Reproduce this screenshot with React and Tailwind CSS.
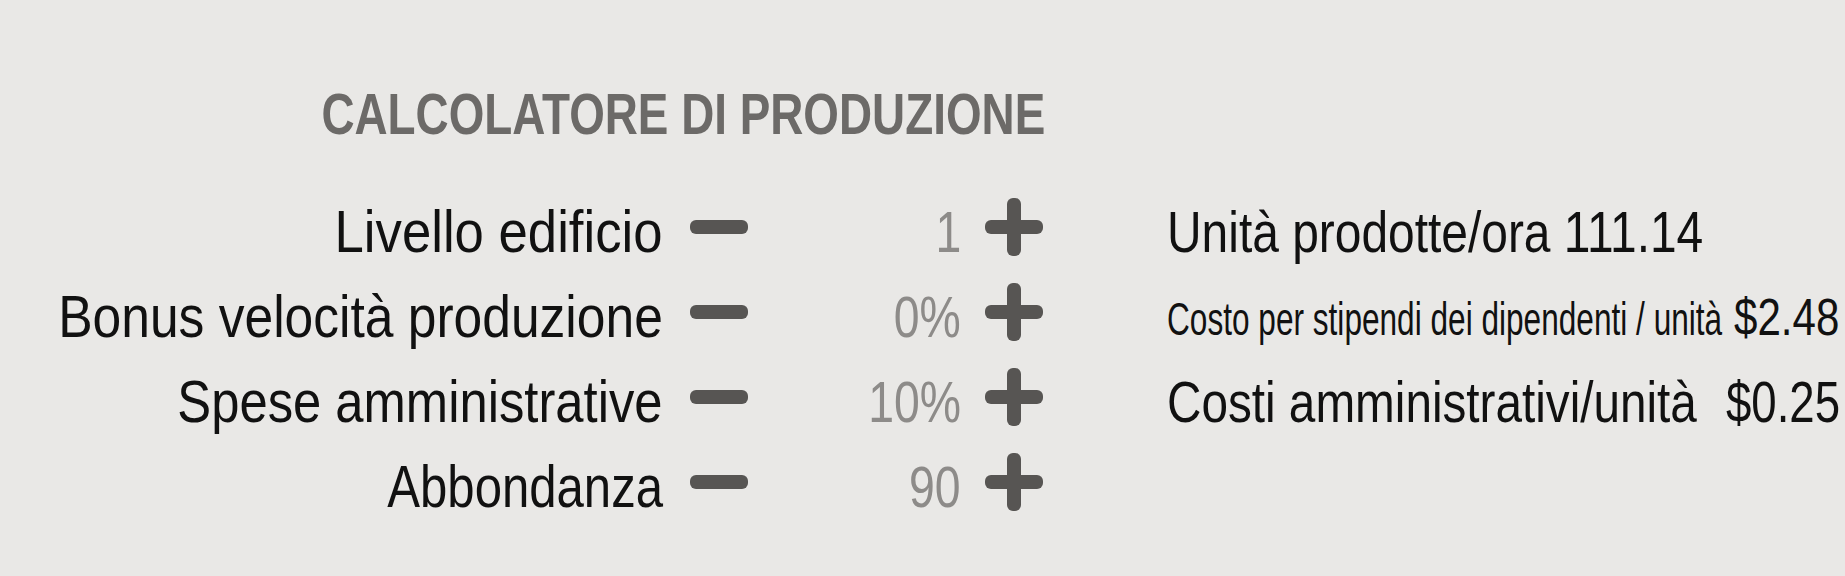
import React from 'react';

// squeeze factors keep each label at its printed width
const rows = [
  { label: 'Livello edificio', value: '1', squeeze: 'scale-x-[0.878]' },
  { label: 'Bonus velocità produzione', value: '0%', squeeze: 'scale-x-[0.859]' },
  { label: 'Spese amministrative', value: '10%', squeeze: 'scale-x-[0.846]' },
  { label: 'Abbondanza', value: '90', squeeze: 'scale-x-[0.818]' },
];

function Minus() {
  return (
    <svg width="58" height="14" viewBox="0 0 58 14" className="mb-[9px] shrink-0">
      <rect x="0" y="0" width="58" height="14" rx="6" fill="#575553" />
    </svg>
  );
}

function Plus() {
  return (
    <svg width="58" height="58" viewBox="0 0 58 58" className="mb-[9px] shrink-0">
      <rect x="0" y="22" width="58" height="14" rx="6" fill="#575553" />
      <rect x="22" y="0" width="14" height="58" rx="6" fill="#575553" />
    </svg>
  );
}

function StepperRow({ label, value, squeeze }) {
  return (
    <div className="flex h-[85px] items-center">
      <span className={`inline-block origin-right ${squeeze} text-[60px] leading-none text-[#111]`}>{label}</span>
      <div className="ml-[27px]">
        <Minus />
      </div>
      <div className="flex w-[213px] justify-end">
        <span className="inline-block origin-right scale-x-[0.8] text-[58px] leading-none text-[#8d8b89]">{value}</span>
      </div>
      <div className="ml-[24px]">
        <Plus />
      </div>
    </div>
  );
}

export default function App() {
  return (
    <div className="flex h-[576px] w-[1845px] items-start overflow-hidden whitespace-nowrap bg-[#e9e8e6] font-['Liberation_Sans',sans-serif]">
      <div className="flex w-[1045px] flex-col items-end pt-[85px]">
        <h1 className="inline-block origin-right scale-x-[0.79] text-[58px] font-bold leading-none text-[#6c6a68]">
          CALCOLATORE DI PRODUZIONE
        </h1>
        <div className="mt-[46px] mr-[2px] flex flex-col items-end">
          {rows.map((r) => (
            <StepperRow key={r.label} {...r} />
          ))}
        </div>
      </div>

      <div className="ml-[65px] mt-[40px] h-[488px] w-[12px] bg-[#8f8e8c]" />

      <div className="ml-[57px] mt-[189px] flex flex-col text-[#111]">
        <div className="flex h-[85px] items-center">
          <span className="inline-block origin-left scale-x-[0.826] text-[58px] leading-none">Unità prodotte/ora 111.14</span>
        </div>
        <div className="flex h-[85px] items-center">
          <div className="flex items-baseline">
            <span className="inline-block w-[555px]">
              <span className="inline-block origin-left scale-x-[0.687] text-[46px] leading-none">
                Costo per stipendi dei dipendenti / unità
              </span>
            </span>
            <span className="ml-[12px] inline-block origin-left scale-x-[0.81] text-[52px] leading-none">$2.48</span>
          </div>
        </div>
        <div className="flex h-[85px] items-center">
          <span className="inline-block w-[528px]">
            <span className="inline-block origin-left scale-x-[0.822] text-[58px] leading-none">Costi amministrativi/unità</span>
          </span>
          <span className="ml-[31px] inline-block origin-left scale-x-[0.786] text-[58px] leading-none">$0.25</span>
        </div>
      </div>
    </div>
  );
}
